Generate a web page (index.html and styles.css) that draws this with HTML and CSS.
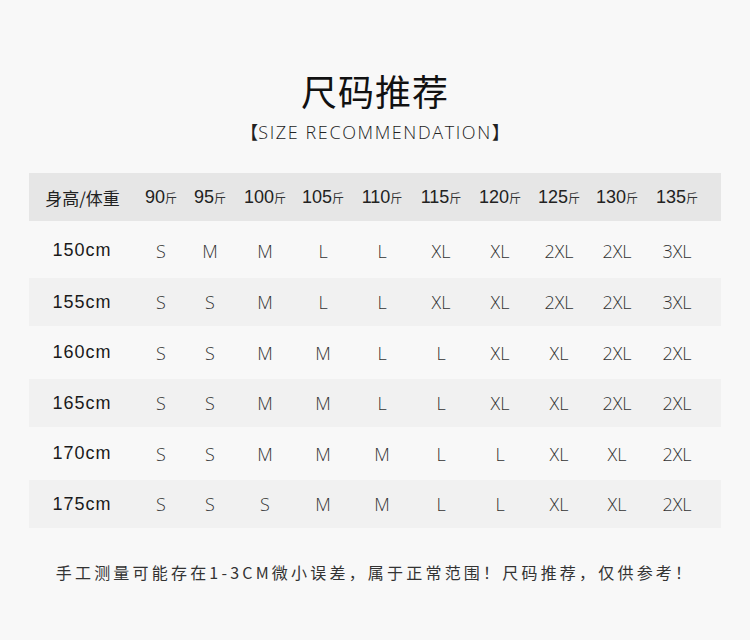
FILE: index.html
```html
<!DOCTYPE html>
<html lang="zh">
<head>
<meta charset="utf-8">
<title>尺码推荐</title>
<link rel="stylesheet" href="styles.css">
</head>
<body>
<div class="page">
  <h1 class="title">尺码推荐</h1>
  <div class="subtitle"><span class="br">【</span>SIZE RECOMMENDATION<span class="br">】</span></div>
  <div class="table">
    <div class="row head">
      <div class="cell first">身高/体重</div>
      <div class="cell">90<small>斤</small></div>
      <div class="cell">95<small>斤</small></div>
      <div class="cell">100<small>斤</small></div>
      <div class="cell">105<small>斤</small></div>
      <div class="cell">110<small>斤</small></div>
      <div class="cell">115<small>斤</small></div>
      <div class="cell">120<small>斤</small></div>
      <div class="cell">125<small>斤</small></div>
      <div class="cell">130<small>斤</small></div>
      <div class="cell">135<small>斤</small></div>
    </div>
    <div class="row odd r1">
      <div class="cell first">150cm</div>
      <div class="cell">S</div><div class="cell">M</div><div class="cell">M</div><div class="cell">L</div><div class="cell">L</div>
      <div class="cell">XL</div><div class="cell">XL</div><div class="cell">2XL</div><div class="cell">2XL</div><div class="cell">3XL</div>
    </div>
    <div class="row even">
      <div class="cell first">155cm</div>
      <div class="cell">S</div><div class="cell">S</div><div class="cell">M</div><div class="cell">L</div><div class="cell">L</div>
      <div class="cell">XL</div><div class="cell">XL</div><div class="cell">2XL</div><div class="cell">2XL</div><div class="cell">3XL</div>
    </div>
    <div class="row odd">
      <div class="cell first">160cm</div>
      <div class="cell">S</div><div class="cell">S</div><div class="cell">M</div><div class="cell">M</div><div class="cell">L</div>
      <div class="cell">L</div><div class="cell">XL</div><div class="cell">XL</div><div class="cell">2XL</div><div class="cell">2XL</div>
    </div>
    <div class="row even">
      <div class="cell first">165cm</div>
      <div class="cell">S</div><div class="cell">S</div><div class="cell">M</div><div class="cell">M</div><div class="cell">L</div>
      <div class="cell">L</div><div class="cell">XL</div><div class="cell">XL</div><div class="cell">2XL</div><div class="cell">2XL</div>
    </div>
    <div class="row odd">
      <div class="cell first">170cm</div>
      <div class="cell">S</div><div class="cell">S</div><div class="cell">M</div><div class="cell">M</div><div class="cell">M</div>
      <div class="cell">L</div><div class="cell">L</div><div class="cell">XL</div><div class="cell">XL</div><div class="cell">2XL</div>
    </div>
    <div class="row even">
      <div class="cell first">175cm</div>
      <div class="cell">S</div><div class="cell">S</div><div class="cell">S</div><div class="cell">M</div><div class="cell">M</div>
      <div class="cell">L</div><div class="cell">L</div><div class="cell">XL</div><div class="cell">XL</div><div class="cell">2XL</div>
    </div>
  </div>
  <p class="note">手工测量可能存在1-3CM微小误差，属于正常范围！尺码推荐，仅供参考！</p>
</div>
</body>
</html>
```
FILE: styles.css
```css
html, body {
  margin: 0;
  padding: 0;
  background: #f8f8f8;
}
body {
  font-family: "Liberation Sans", "Noto Sans CJK SC", sans-serif;
  color: #222;
}
.page {
  width: 750px;
  height: 640px;
  padding-top: 70px;
  box-sizing: border-box;
}
.title {
  margin: 0;
  text-align: center;
  font-family: "Noto Sans CJK SC", sans-serif;
  font-size: 36px;
  line-height: 40px;
  font-weight: 400;
  color: #111;
  letter-spacing: 1px;
}
.subtitle {
  margin-top: 11px;
  text-align: center;
  font-family: "Open Sans", "Noto Sans CJK SC", sans-serif;
  font-weight: 300;
  font-size: 18px;
  line-height: 20px;
  color: #222;
  letter-spacing: 1.6px;
}
.subtitle .br {
  font-family: "Noto Sans CJK SC", sans-serif;
  font-size: 18px;
  font-weight: 400;
  letter-spacing: 0;
}
.table {
  margin: 31px 0 0 29px;
  width: 692px;
}
.row {
  display: grid;
  grid-template-columns: 106px 52px 46px 64px 52px 66px 52px 66px 52px 64px 56px 1fr;
  align-items: center;
}
.row.head {
  height: 48px;
  background: #e6e6e6;
}
.row.odd {
  height: 53px;
}
.row.odd.r1 {
  height: 57px;
  padding-top: 2px;
  box-sizing: border-box;
}
.row.even {
  height: 48px;
  background: #f1f1f1;
}
.cell {
  text-align: center;
  white-space: nowrap;
  font-size: 18px;
  color: #333;
  font-family: "Open Sans", sans-serif;
  font-weight: 300;
}
.head .cell {
  color: #222;
  font-size: 18px;
  font-family: "Liberation Sans", sans-serif;
  font-weight: 400;
}
.head .cell small {
  font-family: "Noto Sans CJK SC", sans-serif;
  font-size: 12px;
  color: #333;
}
.head .cell.first {
  font-family: "Noto Sans CJK SC", sans-serif;
  font-size: 17px;
  color: #222;
  margin-left: 1px;
  letter-spacing: 0;
}
.cell.first {
  color: #1a1a1a;
  letter-spacing: 1px;
  font-size: 18px;
  font-family: "Liberation Sans", sans-serif;
  font-weight: 400;
}
.note {
  margin: 34px 0 0;
  text-align: center;
  font-family: "Noto Sans CJK SC", sans-serif;
  font-size: 16px;
  line-height: 20px;
  letter-spacing: 3.2px;
  color: #333;
}
```
